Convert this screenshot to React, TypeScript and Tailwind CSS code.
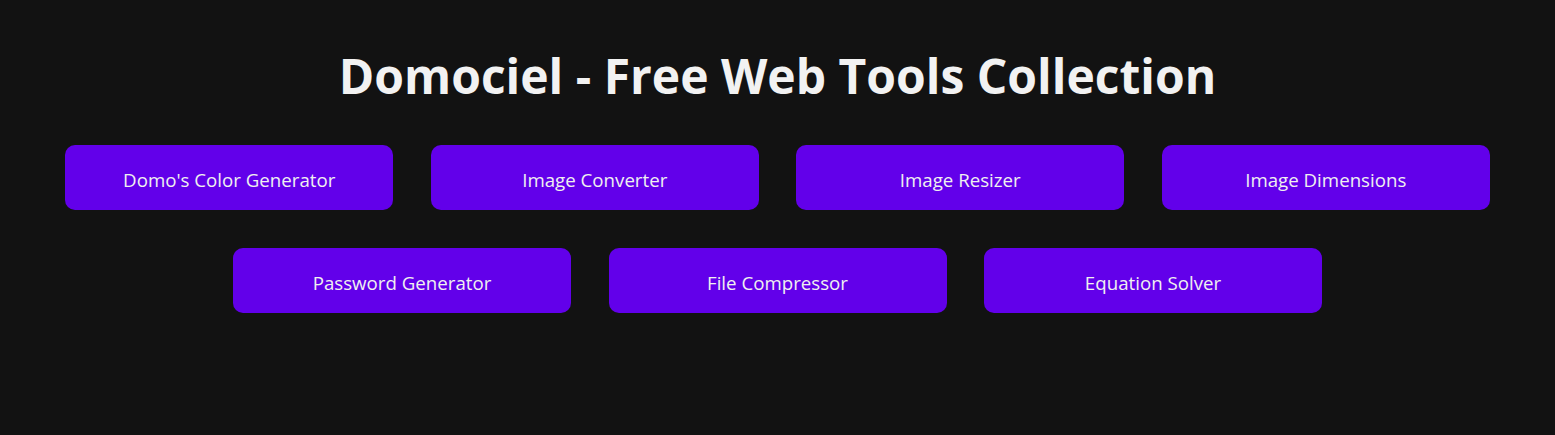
const rowOne = ["Domo's Color Generator", 'Image Converter', 'Image Resizer', 'Image Dimensions'];
const rowTwo = ['Password Generator', 'File Compressor', 'Equation Solver'];

function ToolButton({ label, wide }: { label: string; wide?: boolean }) {
  return (
    <a
      href="#"
      className={`flex h-[65px] items-center justify-center rounded-[10px] bg-[#6200ea] pt-[5px] text-[18.7px] text-[#f0f0f0] ${
        wide ? 'w-[338px]' : 'w-[328px]'
      }`}
    >
      {label}
    </a>
  );
}

export default function App() {
  return (
    <main
      className="min-h-[435px] bg-[#121212] pt-[44px]"
      style={{ fontFamily: '"Open Sans", "Noto Sans", sans-serif' }}
    >
      <h1 className="text-center text-[48px] font-bold leading-[64px] text-[#f2f2f2]">
        Domociel - Free Web Tools Collection
      </h1>
      <div className="mt-[37px] flex flex-col gap-[38px]">
        <div className="flex justify-center gap-[37.5px]">
          {rowOne.map((t) => (
            <ToolButton key={t} label={t} />
          ))}
        </div>
        <div className="flex justify-center gap-[37.5px]">
          {rowTwo.map((t) => (
            <ToolButton key={t} label={t} wide />
          ))}
        </div>
      </div>
    </main>
  );
}
